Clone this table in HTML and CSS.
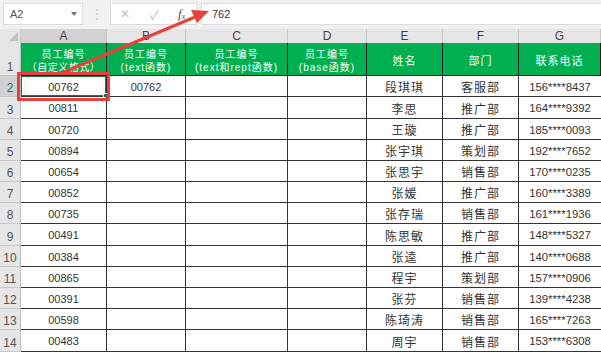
FILE: index.html
```html
<!DOCTYPE html>
<html lang="zh-CN">
<head>
<meta charset="utf-8">
<title>员工编号</title>
<link rel="stylesheet" href="styles.css">
</head>
<body>
<div class="toolbar">
  <div class="namebox"><span>A2</span><span class="drop"></span></div>
  <div class="sep">⋮</div>
  <div class="fxbox"><span class="x">✕</span><span class="ok">✓</span><span class="fx">f<sub>x</sub></span></div>
  <div class="formula">762</div>
</div>
<div class="sheet">
  <div class="corner"><span class="tri"></span></div>
  <div class="ch sel-h">A</div><div class="ch">B</div><div class="ch">C</div><div class="ch">D</div><div class="ch">E</div><div class="ch">F</div><div class="ch">G</div>

  <div class="rh">1</div>
  <div class="hd two"><span>员工编号</span><span class="wide">（自定义格式）</span></div>
  <div class="hd two"><span>员工编号</span><span>(text函数)</span></div>
  <div class="hd two"><span>员工编号</span><span>(text和rept函数)</span></div>
  <div class="hd two"><span>员工编号</span><span>(base函数)</span></div>
  <div class="hd">姓名</div>
  <div class="hd">部门</div>
  <div class="hd">联系电话</div>

  <div class="rh sel-r">2</div><div class="c sel">00762<span class="handle"></span></div><div class="c">00762</div><div class="c"></div><div class="c"></div><div class="c cj">段琪琪</div><div class="c cj">客服部</div><div class="c ph">156****8437</div>
  <div class="rh">3</div><div class="c">00811</div><div class="c"></div><div class="c"></div><div class="c"></div><div class="c cj">李思</div><div class="c cj">推广部</div><div class="c ph">164****9392</div>
  <div class="rh">4</div><div class="c">00720</div><div class="c"></div><div class="c"></div><div class="c"></div><div class="c cj">王璇</div><div class="c cj">推广部</div><div class="c ph">185****0093</div>
  <div class="rh">5</div><div class="c">00894</div><div class="c"></div><div class="c"></div><div class="c"></div><div class="c cj">张宇琪</div><div class="c cj">策划部</div><div class="c ph">192****7652</div>
  <div class="rh">6</div><div class="c">00654</div><div class="c"></div><div class="c"></div><div class="c"></div><div class="c cj">张思宇</div><div class="c cj">销售部</div><div class="c ph">170****0235</div>
  <div class="rh">7</div><div class="c">00852</div><div class="c"></div><div class="c"></div><div class="c"></div><div class="c cj">张媛</div><div class="c cj">推广部</div><div class="c ph">160****3389</div>
  <div class="rh">8</div><div class="c">00735</div><div class="c"></div><div class="c"></div><div class="c"></div><div class="c cj">张存瑞</div><div class="c cj">销售部</div><div class="c ph">161****1936</div>
  <div class="rh">9</div><div class="c">00491</div><div class="c"></div><div class="c"></div><div class="c"></div><div class="c cj">陈思敏</div><div class="c cj">推广部</div><div class="c ph">148****5327</div>
  <div class="rh">10</div><div class="c">00384</div><div class="c"></div><div class="c"></div><div class="c"></div><div class="c cj">张逵</div><div class="c cj">推广部</div><div class="c ph">140****0688</div>
  <div class="rh">11</div><div class="c">00865</div><div class="c"></div><div class="c"></div><div class="c"></div><div class="c cj">程宇</div><div class="c cj">策划部</div><div class="c ph">157****0906</div>
  <div class="rh">12</div><div class="c">00391</div><div class="c"></div><div class="c"></div><div class="c"></div><div class="c cj">张芬</div><div class="c cj">销售部</div><div class="c ph">139****4238</div>
  <div class="rh">13</div><div class="c">00598</div><div class="c"></div><div class="c"></div><div class="c"></div><div class="c cj">陈琦涛</div><div class="c cj">销售部</div><div class="c ph">165****7263</div>
  <div class="rh">14</div><div class="c">00483</div><div class="c"></div><div class="c"></div><div class="c"></div><div class="c cj">周宇</div><div class="c cj">销售部</div><div class="c ph">153****6308</div>
</div>

<div class="redbox"></div>
<svg class="arrow" width="601" height="352" viewBox="0 0 601 352">
  <line x1="64" y1="72" x2="195" y2="17" stroke="#e8413c" stroke-width="3" stroke-linecap="round"/>
  <polygon points="209,11 197,23 191,10" fill="#e8413c"/>
</svg>
</body>
</html>
```
FILE: styles.css
```css
* { box-sizing: border-box; }
html, body { margin: 0; padding: 0; }
body {
  width: 601px;
  height: 352px;
  overflow: hidden;
  position: relative;
  background: #ffffff;
  font-family: "Liberation Sans", "Noto Sans CJK SC", sans-serif;
  color: #222;
}

/* toolbar */
.toolbar {
  height: 29px;
  background: #f1f1f1;
  display: flex;
  align-items: flex-start;
  padding: 3px 0 0 3px;
}
.namebox {
  width: 80px;
  height: 22px;
  background: #fff;
  border: 1px solid #dcdcdc;
  display: flex;
  align-items: center;
  justify-content: space-between;
  padding: 0 5px 0 6px;
  font-size: 11px;
  color: #555;
}
.drop {
  width: 0; height: 0;
  border-left: 3.5px solid transparent;
  border-right: 3.5px solid transparent;
  border-top: 4px solid #777;
}
.sep {
  width: 27px;
  height: 22px;
  display: flex;
  align-items: center;
  justify-content: center;
  color: #c4c4c4;
  font-size: 12px;
}
.fxbox {
  width: 87px;
  height: 22px;
  background: #fff;
  border: 1px solid #dcdcdc;
  display: flex;
  align-items: center;
  padding-left: 9px;
}
.fxbox .x { color: #c2c2c2; font-size: 12px; width: 30px; }
.fxbox .ok { color: #c2c2c2; font-size: 13px; width: 28px; }
.fxbox .fx {
  color: #555;
  font-family: "Liberation Serif", serif;
  font-style: italic;
  font-size: 13px;
}
.fxbox .fx sub { font-size: 8px; vertical-align: -1px; }
.formula {
  flex: 1;
  height: 22px;
  margin-left: 4px;
  background: #fff;
  border: 1px solid #dcdcdc;
  border-right: none;
  display: flex;
  align-items: center;
  padding-left: 10px;
  font-size: 11px;
  color: #333;
}

/* sheet */
.sheet {
  display: grid;
  grid-template-columns: 21px 86px 79px 102px 79px 76px 76px 82px;
  grid-template-rows: 14px 33px 21px 22px 21px 21px 21px 21px 21px 22px 21px 21px 21px 21px 22px;
}
.corner {
  background: #e6e6e6;
  border-right: 1px solid #c8c8c8;
  position: relative;
}
.tri {
  position: absolute;
  right: 2px;
  bottom: 2px;
  width: 0; height: 0;
  border-left: 9px solid transparent;
  border-bottom: 9px solid #c2c2c2;
}
.ch {
  background: #e6e6e6;
  border-right: 1px solid #c8c8c8;
  font-size: 12px;
  line-height: 15px;
  color: #444;
  text-align: center;
}
.ch.sel-h { background: #d2d2d2; }
.rh {
  background: #e6e6e6;
  border-right: 1px solid #bdbdbd;
  border-bottom: 1px solid #c8c8c8;
  font-size: 12px;
  color: #555;
  display: flex;
  align-items: flex-end;
  justify-content: center;
  padding-bottom: 1px;
}
.rh.sel-r { background: #d2d2d2; color: #217346; }
.hd {
  background: #00b050;
  color: #fff;
  border-right: 1px solid #1d1d1d;
  border-bottom: 1px solid #1d1d1d;
  display: flex;
  flex-direction: column;
  align-items: center;
  justify-content: center;
  font-size: 11px;
  letter-spacing: 1px;
  padding-top: 1px;
}
.hd.two {
  font-size: 10px;
  line-height: 13px;
  padding-top: 3px;
}
.hd .wide { letter-spacing: 0.5px; }
.c {
  border-right: 1px solid #333;
  border-bottom: 1px solid #333;
  display: flex;
  align-items: center;
  justify-content: center;
  font-size: 11px;
  color: #333;
  padding-top: 1px;
  position: relative;
}
.c.cj { font-size: 12px; letter-spacing: 1px; }
.c.ph { border-right: none; font-size: 11.3px; }
.c.sel { box-shadow: inset 0 0 0 1px #217346; }
.handle {
  position: absolute;
  right: -2px;
  bottom: -2px;
  width: 5px;
  height: 5px;
  background: #217346;
  border: 1px solid #fff;
}

/* annotations */
.redbox {
  position: absolute;
  left: 17px;
  top: 72px;
  width: 93px;
  height: 29px;
  border: 3px solid #e8413c;
}
.arrow {
  position: absolute;
  left: 0;
  top: 0;
  pointer-events: none;
}
```
